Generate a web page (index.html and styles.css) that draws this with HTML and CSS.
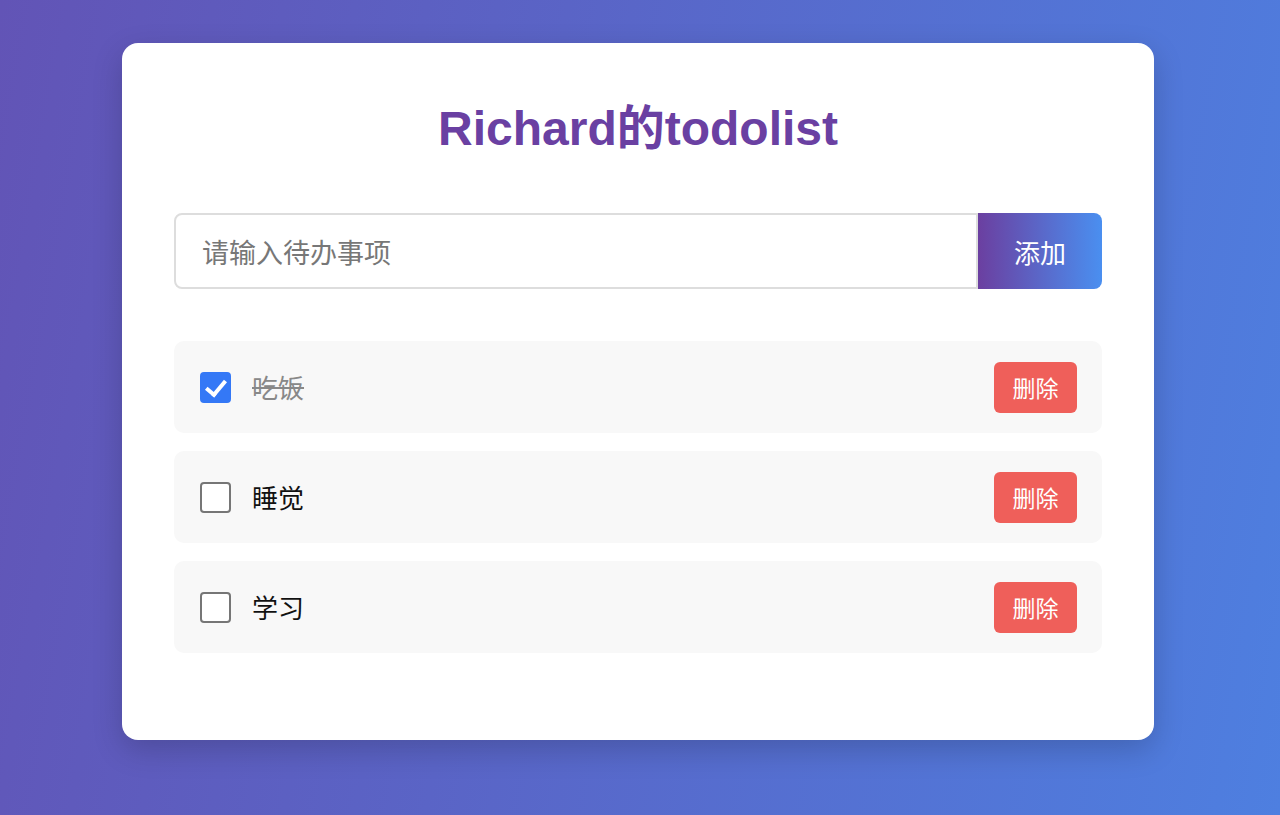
FILE: index.html
```html
<!DOCTYPE html>
<html lang="zh">
<head>
<meta charset="utf-8">
<title>Richard的todolist</title>
<link rel="stylesheet" href="styles.css">
</head>
<body>
<main class="card">
  <h1 class="title">Richard的todolist</h1>
  <div class="add-row">
    <input class="add-input" type="text" placeholder="请输入待办事项">
    <button class="add-btn">添加</button>
  </div>
  <ul class="list">
    <li class="item done">
      <input class="check" type="checkbox" checked>
      <span class="text">吃饭</span>
      <button class="del-btn">删除</button>
    </li>
    <li class="item">
      <input class="check" type="checkbox">
      <span class="text">睡觉</span>
      <button class="del-btn">删除</button>
    </li>
    <li class="item">
      <input class="check" type="checkbox">
      <span class="text">学习</span>
      <button class="del-btn">删除</button>
    </li>
  </ul>
</main>
</body>
</html>
```
FILE: styles.css
```css
* { box-sizing: border-box; }
html, body { height: 100%; }
body {
  margin: 0;
  min-height: 815px;
  background: linear-gradient(100deg, #6254b6 0%, #5a64c6 40%, #4e7fe0 100%);
  font-family: "Liberation Sans", "Noto Sans CJK SC", sans-serif;
  padding: 43px 4px 0 0;
}
.card {
  width: 1032px;
  margin: 0 auto;
  background: #fff;
  border-radius: 16px;
  padding: 57px 52px 87px;
  box-shadow: 0 10px 30px rgba(0, 0, 0, 0.18);
}
.title {
  margin: 0;
  text-align: center;
  font-family: "Liberation Sans", "Noto Sans CJK SC", sans-serif;
  font-weight: bold;
  font-size: 48px;
  line-height: 58px;
  color: #6a40a2;
}
.add-row {
  display: flex;
  margin-top: 55px;
  height: 76px;
}
.add-input {
  flex: 1;
  min-width: 0;
  height: 76px;
  border: 2px solid #dddddd;
  border-radius: 8px 0 0 8px;
  padding: 0 26px;
  font-family: "Noto Sans CJK SC", sans-serif;
  font-size: 27px;
  color: #333;
  outline: none;
}
.add-input::placeholder { color: #777; }
.add-btn {
  width: 124px;
  height: 76px;
  border: none;
  border-radius: 0 8px 8px 0;
  background: linear-gradient(90deg, #6b3fa0 0%, #4a8ff0 100%);
  color: #fff;
  font-family: "Noto Sans CJK SC", sans-serif;
  font-size: 26px;
  padding: 0;
}
.list {
  list-style: none;
  margin: 52px 0 0;
  padding: 0;
  display: flex;
  flex-direction: column;
  gap: 18px;
}
.item {
  display: flex;
  align-items: center;
  height: 92px;
  padding: 0 25px 0 26px;
  background: #f8f8f8;
  border-radius: 10px;
}
.check {
  appearance: none;
  -webkit-appearance: none;
  margin: 0;
  width: 31px;
  height: 31px;
  border: 2px solid #767676;
  border-radius: 4px;
  background: #fff;
  position: relative;
  flex: none;
}
.check:checked {
  background: #3478f6;
  border-color: #3478f6;
}
.check:checked::after {
  content: "";
  position: absolute;
  left: 8px;
  top: 2px;
  width: 8px;
  height: 16px;
  border: solid #fff;
  border-width: 0 4px 4px 0;
  transform: rotate(40deg);
}
.text {
  flex: 1;
  margin-left: 21px;
  margin-top: -2px;
  font-family: "Noto Sans CJK SC", sans-serif;
  font-size: 26px;
  color: #111;
}
.done .text {
  color: #888;
  text-decoration: line-through;
}
.del-btn {
  width: 83px;
  height: 51px;
  border: none;
  border-radius: 6px;
  background: #ef5f5a;
  color: #fff;
  font-family: "Noto Sans CJK SC", sans-serif;
  font-size: 23px;
  padding: 0;
}
```
